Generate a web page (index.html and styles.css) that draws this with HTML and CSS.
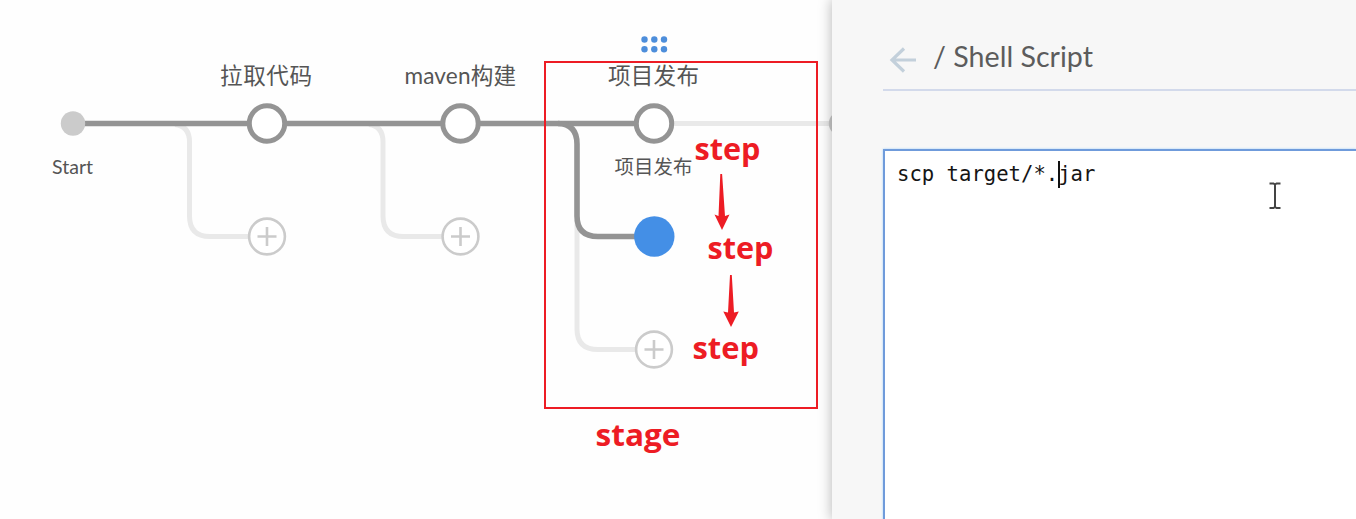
FILE: index.html
```
<!DOCTYPE html>
<html lang="zh">
<head>
<meta charset="utf-8">
<title>Pipeline editor</title>
<link rel="stylesheet" href="styles.css">
</head>
<body>
<main class="editor">
  <section class="graph">
    <svg class="canvas" width="832" height="519" viewBox="0 0 832 519">
      <g class="link-light">
        <path d="M175 124.5Q189.500 126 189.500 142V216Q189.500 236.500 210 236.500H248"/>
        <path d="M369 124.5Q383 126 383 142V216Q383 236.500 403.500 236.500H442"/>
        <path d="M577 220V329Q577 349.500 598 349.500H635"/>
        <path d="M673 123.500H832"/>
      </g>
      <g class="link">
        <path d="M84 123.500H654"/>
        <path d="M558 123.500Q577 124 577 144V216Q577 236.500 598 236.500H640"/>
      </g>
      <circle class="start" cx="73" cy="123.500" r="12.200"/>
      <circle class="end" cx="841" cy="123.500" r="12.200"/>
      <g class="node">
        <circle cx="267" cy="123.500" r="17.700"/>
        <circle cx="460.500" cy="123.500" r="17.700"/>
        <circle cx="654" cy="123.500" r="17.700"/>
      </g>
      <circle class="selected" cx="654.300" cy="236.500" r="20.200"/>
      <g class="add">
        <circle cx="267" cy="236.500" r="17.900"/><path d="M257.500 236.500h19M267 227v19"/>
        <circle cx="460.500" cy="236.500" r="17.900"/><path d="M451 236.500h19M460.500 227v19"/>
        <circle cx="654" cy="349.500" r="17.900"/><path d="M644.500 349.500h19M654 340v19"/>
      </g>
      <g class="grip">
        <circle cx="644.500" cy="39.500" r="3.200"/><circle cx="654.300" cy="39.500" r="3.200"/><circle cx="664" cy="39.500" r="3.200"/>
        <circle cx="644.500" cy="49.200" r="3.200"/><circle cx="654.300" cy="49.200" r="3.200"/><circle cx="664" cy="49.200" r="3.200"/>
      </g>
      <g class="label">
        <text x="220" y="83.500" textLength="92">拉取代码</text>
        <text x="404.500" y="83.500" textLength="111.500">maven构建</text>
        <text x="608" y="83.500" textLength="91">项目发布</text>
      </g>
      <g class="label small">
        <text x="52" y="173.500" textLength="41" lengthAdjust="spacingAndGlyphs">Start</text>
        <text x="614.500" y="173.500" textLength="78">项目发布</text>
      </g>
      <rect class="frame" x="545" y="62" width="272" height="346"/>
      <g class="note">
        <text x="694.500" y="159.500" textLength="66" lengthAdjust="spacingAndGlyphs">step</text>
        <text x="707.500" y="258.500" textLength="66" lengthAdjust="spacingAndGlyphs">step</text>
        <text x="692.500" y="358.500" textLength="66.500" lengthAdjust="spacingAndGlyphs">step</text>
        <text x="595.500" y="445.500" textLength="85" lengthAdjust="spacingAndGlyphs">stage</text>
        <path d="M720.300 174h1.800L725 216L729.500 214.500L722 230L714.500 214.500L718.500 216Z"/>
        <path d="M730 275h1.800L734 312.500L738.800 311.500L731 327L723.300 311.500L728 312.500Z"/>
      </g>
    </svg>
  </section>
  <aside class="panel">
    <header class="panel-head">
      <svg class="back" width="28" height="28" viewBox="0 0 28 28"><path d="M27 14H3M15 2.500L3 14L15 25.500"/></svg>
      <svg class="title" width="180" height="40"><text x="0" y="29" textLength="160" lengthAdjust="spacingAndGlyphs">/ Shell Script</text></svg>
    </header>
    <div class="script">
      <pre class="code">scp target/*.<span class="caret"></span>jar</pre>
      <svg class="pointer" width="14" height="28" viewBox="0 0 14 28"><path d="M1.500 1.500H5.500L7 2.500L8.500 1.500H12.500M7 2.500V25.500M1.500 26H5.500L7 25L8.500 26H12.500"/></svg>
    </div>
  </aside>
</main>
</body>
</html>
```
FILE: styles.css
```
* { box-sizing: border-box; }
body { margin: 0; }
.editor { display: flex; width: 1356px; height: 519px; overflow: hidden; background: #fefefe; font-family: Lato, "Noto Sans CJK SC", sans-serif; }
.graph { flex: 0 0 832px; height: 519px; }
.canvas { display: block; }
.link, .link-light { fill: none; stroke: #949494; stroke-width: 5.6; }
.link-light { stroke: #e9e9e9; stroke-width: 5; }
.start, .end { fill: #cbcbcb; }
.node { fill: #fff; stroke: #949494; stroke-width: 5; }
.selected { fill: #448fe6; }
.add { fill: #fff; stroke: #cbcbcb; stroke-width: 2.6; }
.grip { fill: #4d8edb; }
.label { font-size: 22.6px; fill: #555; font-weight: 400; }
.small { font-size: 19.4px; }
.frame { fill: none; stroke: #ed1c24; stroke-width: 2; }
.note { fill: #ed1c24; font: 700 31px "Open Sans", sans-serif; }
.panel { flex: 1; position: relative; padding: 38px 0 0 51px; background: #f7f7f7; box-shadow: 0 0 12px 1px rgba(0, 0, 0, .26); clip-path: inset(0 0 0 -20px); }
.panel-head { display: flex; height: 53px; border-bottom: 2px solid #d3daeb; }
.back { margin: 8px 0 0 6px; fill: none; stroke: #c3d0db; stroke-width: 3.2; }
.title { margin-left: 16px; font-size: 28.5px; fill: #5c5c5c; }
.script { display: flex; justify-content: space-between; height: 390px; margin-top: 58px; padding: 10px 74px 0 12px; background: #fff; border: 2px solid #6f9bdb; border-right: 0; box-shadow: 0 0 2px #9fd0ff; }
.code { margin: 0; color: #151515; font: 20.6px/26px "DejaVu Sans Mono", monospace; }
.caret { display: inline-block; width: 2px; height: 27px; margin-right: -2px; background: #111; vertical-align: -7px; }
.pointer { margin-top: 21px; fill: none; stroke: #444; stroke-width: 2; }
```
